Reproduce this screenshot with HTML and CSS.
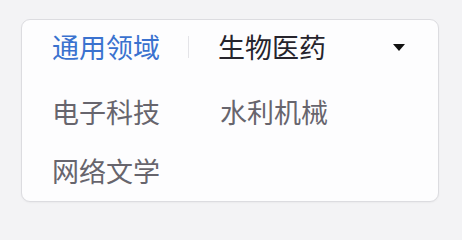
FILE: index.html
```html
<!DOCTYPE html>
<html lang="zh">
<head>
<meta charset="utf-8">
<link rel="stylesheet" href="styles.css">
</head>
<body>
<div class="card">
  <div class="head">
    <span class="tab active">通用领域</span>
    <span class="sep"></span>
    <span class="tab current">生物医药</span>
    <span class="caret"></span>
  </div>
  <div class="grid">
    <span class="tab">电子科技</span>
    <span class="tab">水利机械</span>
    <span class="tab">网络文学</span>
  </div>
</div>
</body>
</html>
```
FILE: styles.css
```css
html, body {
  margin: 0;
  padding: 0;
}
body {
  width: 462px;
  height: 218px;
  background: #f3f3f5;
  font-family: "Noto Sans CJK SC", "Noto Sans", sans-serif;
  overflow: hidden;
}
.card {
  box-sizing: border-box;
  margin: 19px 0 0 21px;
  width: 418px;
  height: 183px;
  background: #fdfdfe;
  border: 1px solid #dcdce0;
  border-radius: 9px;
  box-shadow: 0 1px 2px rgba(0,0,0,0.04);
  padding: 0 0 0 30px;
}
.tab {
  font-size: 27px;
  letter-spacing: 0;
  line-height: 32px;
  color: #67656d;
  white-space: nowrap;
}
.head {
  display: flex;
  align-items: center;
  height: 54px;
}
.active {
  color: #3a72cf;
}
.current {
  color: #26242c;
}
.sep {
  width: 1px;
  height: 22px;
  background: #e4e4e8;
  margin: 0 29px 0 28px;
}
.caret {
  width: 0;
  height: 0;
  border-left: 6px solid transparent;
  border-right: 6px solid transparent;
  border-top: 7px solid #111;
  margin-left: auto;
  margin-right: 33px;
}
.grid {
  display: grid;
  grid-template-columns: 168px 168px;
  row-gap: 27px;
  margin-top: 22px;
}
```
